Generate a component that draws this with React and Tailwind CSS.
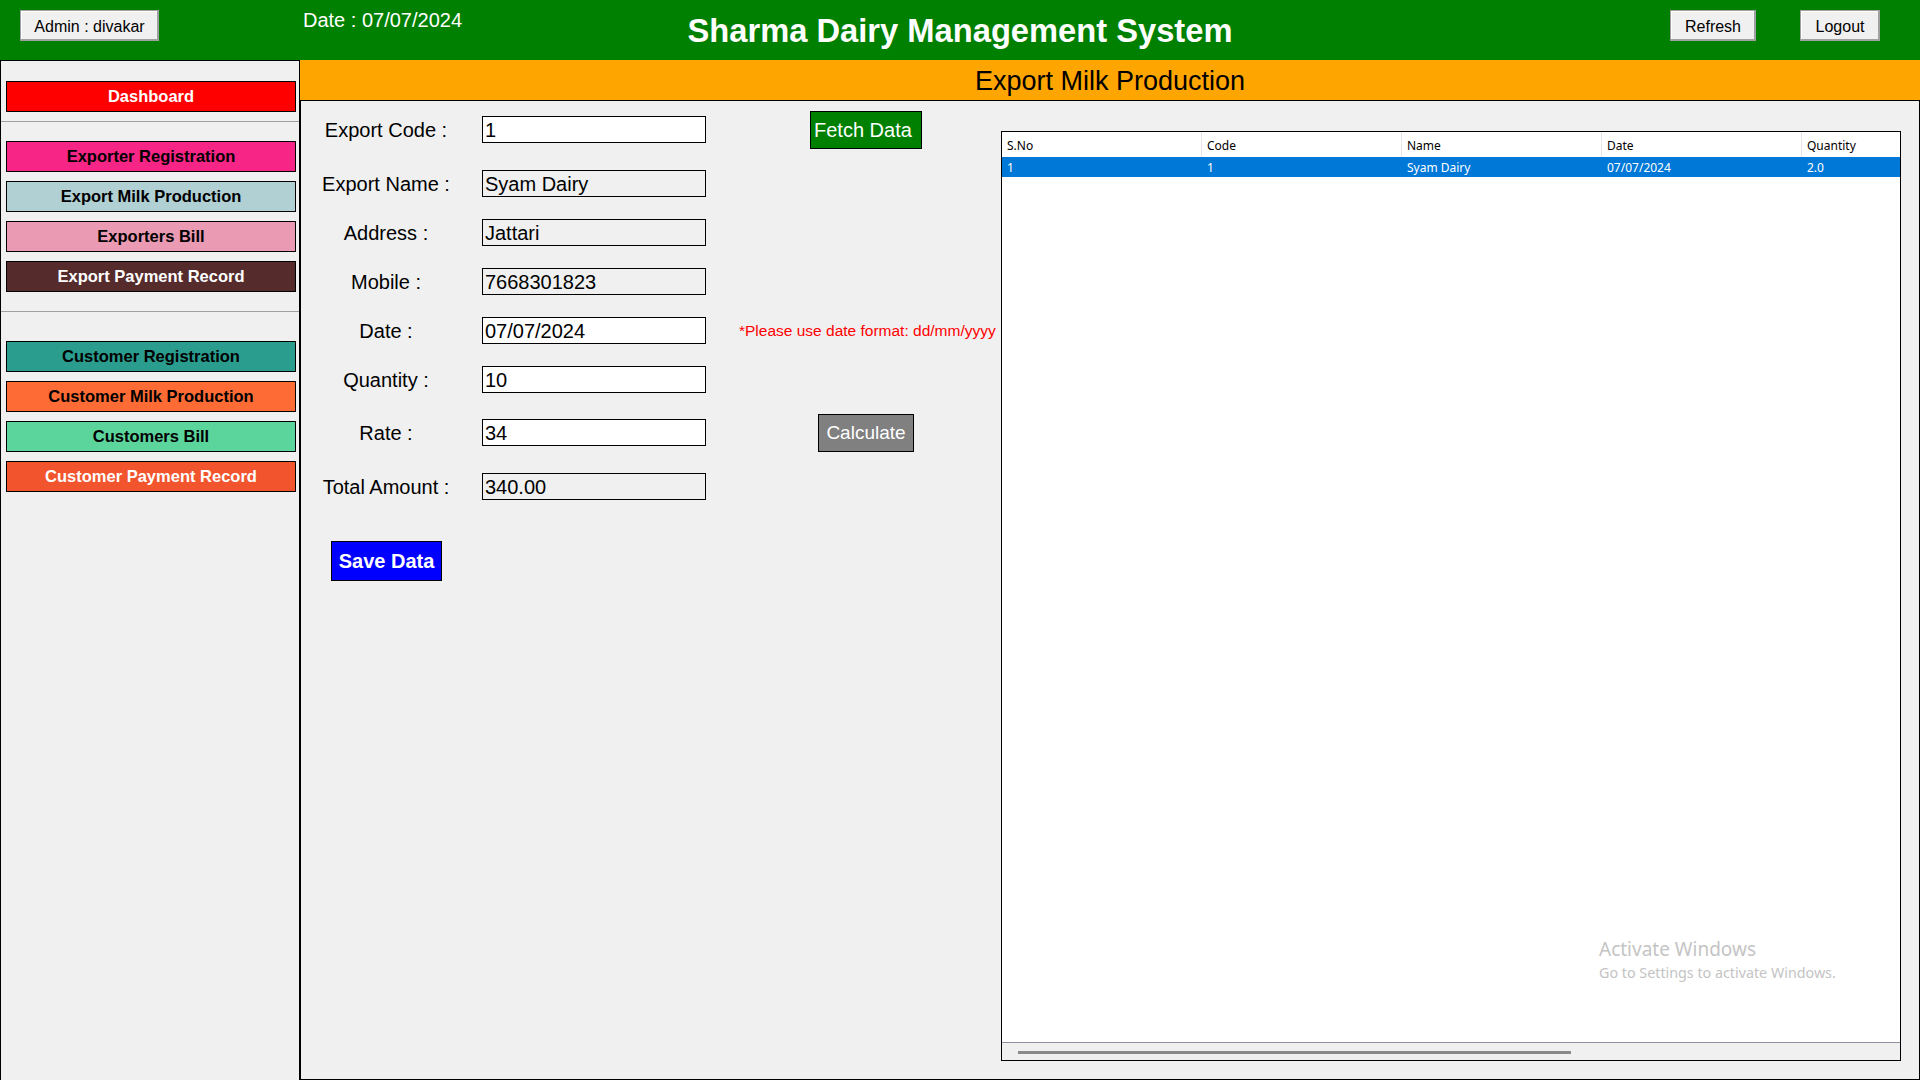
import React from 'react';

const sideGroups = [
  [{ label: 'Dashboard', bg: 'bg-[#ff0000]', fg: 'text-white' }],
  [
    { label: 'Exporter Registration', bg: 'bg-[#f72585]', fg: 'text-black' },
    { label: 'Export Milk Production', bg: 'bg-[#b0d0d3]', fg: 'text-black' },
    { label: 'Exporters Bill', bg: 'bg-[#ea9ab2]', fg: 'text-black' },
    { label: 'Export Payment Record', bg: 'bg-[#552b2c]', fg: 'text-white' },
  ],
  [
    { label: 'Customer Registration', bg: 'bg-[#2a9d8f]', fg: 'text-black' },
    { label: 'Customer Milk Production', bg: 'bg-[#ff6b35]', fg: 'text-black' },
    { label: 'Customers Bill', bg: 'bg-[#5cd59d]', fg: 'text-black' },
    { label: 'Customer Payment Record', bg: 'bg-[#f2542d]', fg: 'text-white' },
  ],
];

const rows = [
  { label: 'Export Code :', value: '1', white: true, mt: 'mt-0' },
  { label: 'Export Name :', value: 'Syam Dairy', white: false, mt: 'mt-[27px]' },
  { label: 'Address :', value: 'Jattari', white: false, mt: 'mt-[22px]' },
  { label: 'Mobile :', value: '7668301823', white: false, mt: 'mt-[22px]' },
  { label: 'Date :', value: '07/07/2024', white: true, mt: 'mt-[22px]' },
  { label: 'Quantity :', value: '10', white: true, mt: 'mt-[22px]' },
  { label: 'Rate :', value: '34', white: true, mt: 'mt-[26px]' },
  { label: 'Total Amount :', value: '340.00', white: false, mt: 'mt-[27px]' },
];

const columns = ['S.No', 'Code', 'Name', 'Date', 'Quantity'];
const tableData = [['1', '1', 'Syam Dairy', '07/07/2024', '2.0']];

const winButton =
  'h-[31px] pt-[3px] bg-[#f0f0f0] border border-[#a0a0a0] shadow-[inset_-1px_-1px_0_#a0a0a0,inset_1px_1px_0_#ffffff] text-[16px] text-black flex items-center justify-center';

const SideButton = ({ item }) => (
  <div
    className={`w-[290px] h-[31px] border border-black ${item.bg} ${item.fg} text-[16.5px] font-bold flex items-center justify-center`}
  >
    {item.label}
  </div>
);

const Sidebar = () => (
  <div className="w-[300px] shrink-0 border-t border-l border-r border-black pt-[20px]">
    <div className="px-[5px]">
      <SideButton item={sideGroups[0][0]} />
    </div>
    <div className="mt-[9px] h-px bg-[#a0a0a0]" />
    <div className="mt-[19px] px-[5px] flex flex-col gap-[9px]">
      {sideGroups[1].map((item) => (
        <SideButton key={item.label} item={item} />
      ))}
    </div>
    <div className="mt-[19px] h-px bg-[#a0a0a0]" />
    <div className="mt-[29px] px-[5px] flex flex-col gap-[9px]">
      {sideGroups[2].map((item) => (
        <SideButton key={item.label} item={item} />
      ))}
    </div>
  </div>
);

const FormRow = ({ row, children }) => (
  <div className={`${row.mt} h-[27px] flex items-center`}>
    <div className="w-[170px] pt-[2px] text-center text-[20px] leading-[23px] text-black">{row.label}</div>
    <input
      readOnly
      defaultValue={row.value}
      className={`ml-[11px] w-[224px] h-[27px] border border-black px-[2px] text-[20px] text-black outline-none ${
        row.white ? 'bg-white' : 'bg-[#f0f0f0]'
      }`}
    />
    {children}
  </div>
);

const DataTable = () => (
  <div className="mt-[30px] w-[900px] h-[930px] border border-black bg-white flex flex-col overflow-hidden font-['Noto_Sans',sans-serif] text-[12px]">
    <div className="h-[25px] flex shrink-0">
      {columns.map((c) => (
        <div key={c} className="w-[200px] shrink-0 border-r border-[#e5e5e5] pl-[5px] pt-[2px] flex items-center text-black">
          {c}
        </div>
      ))}
    </div>
    {tableData.map((r, i) => (
      <div key={i} className="h-[20px] flex shrink-0 bg-[#0078d7] text-white">
        {r.map((v, j) => (
          <div key={j} className="w-[200px] shrink-0 pl-[5px] pt-[2px] flex items-center">
            {v}
          </div>
        ))}
      </div>
    ))}
    <div className="flex-1" />
    <div className="h-[18px] shrink-0 border-t border-[#8e8e9e] bg-[#f0f0f0]">
      <div className="ml-[16px] mt-[8px] w-[553px] h-[3px] bg-[#8a8a8a]" />
    </div>
  </div>
);

export default function App() {
  return (
    <div className="relative w-[1920px] h-[1080px] overflow-hidden bg-[#f0f0f0] font-['Liberation_Sans',Arial,sans-serif]">
      {/* Header */}
      <div className="h-[60px] bg-[#008000] grid grid-cols-[1fr_auto_1fr]">
        <div className="flex items-start">
          <div className={`${winButton} ml-[20px] mt-[10px] w-[139px]`}>Admin : divakar</div>
          <div className="ml-[144px] mt-[9px] text-[20px] leading-[23px] text-white">Date : 07/07/2024</div>
        </div>
        <div className="mt-[12px] text-[32.7px] leading-[37px] font-bold text-white">Sharma Dairy Management System</div>
        <div className="flex items-start justify-end pr-[40px]">
          <div className={`${winButton} mt-[10px] w-[86px]`}>Refresh</div>
          <div className={`${winButton} mt-[10px] ml-[44px] w-[80px]`}>Logout</div>
        </div>
      </div>

      <div className="flex h-[1020px]">
        <Sidebar />

        <div className="flex-1 flex flex-col">
          <div className="h-[40px] shrink-0 bg-[#ffa500] flex items-center justify-center pt-[3px] text-[27px] text-black">
            Export Milk Production
          </div>

          <div className="flex-1 border border-black flex">
            {/* Form */}
            <div className="w-[700px] shrink-0 pt-[15px] flex flex-col">
              {rows.map((row) => (
                <FormRow key={row.label} row={row}>
                  {row.label === 'Export Code :' && (
                    <div className="ml-[104px] w-[112px] h-[38px] shrink-0 bg-[#008000] border border-black text-white text-[20px] flex items-center pl-[3px]">
                      Fetch Data
                    </div>
                  )}
                  {row.label === 'Date :' && (
                    <div className="ml-[33px] pt-px text-[15.5px] text-[#ff0000] whitespace-nowrap">
                      *Please use date format: dd/mm/yyyy
                    </div>
                  )}
                  {row.label === 'Rate :' && (
                    <div className="ml-[112px] w-[96px] h-[38px] shrink-0 pt-px bg-[#808080] border border-black text-white text-[19px] flex items-center justify-center">
                      Calculate
                    </div>
                  )}
                </FormRow>
              ))}
              <div className="mt-[41px] ml-[30px] w-[111px] h-[40px] bg-[#0000ff] border border-black text-white text-[20px] font-bold flex items-center justify-center">
                Save Data
              </div>
            </div>

            <DataTable />
          </div>
        </div>
      </div>

      {/* Windows watermark */}
      <div className="absolute left-[1599px] top-[937px] text-[#c4c4c4] font-['Noto_Sans',sans-serif] pointer-events-none">
        <div className="text-[19px] leading-[25px]">Activate Windows</div>
        <div className="text-[14.3px] leading-[21px]">Go to Settings to activate Windows.</div>
      </div>
    </div>
  );
}
